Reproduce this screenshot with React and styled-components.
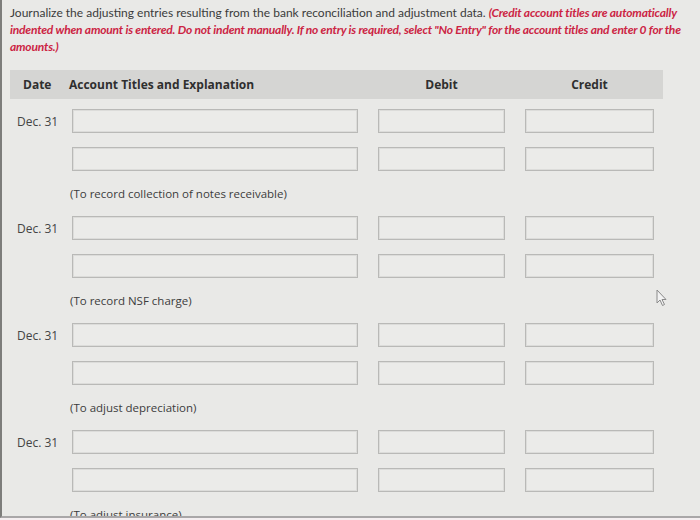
import React from 'react';
import styled, { createGlobalStyle } from 'styled-components';

const GlobalStyle = createGlobalStyle`
  html, body {
    margin: 0;
    padding: 0;
    background: #f4eef0;
  }
`;

const entries = [
  { date: 'Dec. 31', note: '(To record collection of notes receivable)' },
  { date: 'Dec. 31', note: '(To record NSF charge)' },
  { date: 'Dec. 31', note: '(To adjust depreciation)' },
  { date: 'Dec. 31', note: '(To adjust insurance)' },
];

export default function App() {
  return (
    <>
      <GlobalStyle />
      <Page>
        <Instructions>
          Journalize the adjusting entries resulting from the bank reconciliation and adjustment data.{' '}
          <Warning>
            (Credit account titles are automatically indented when amount is entered. Do not indent manually. If no
            entry is required, select "No Entry" for the account titles and enter 0 for the amounts.)
          </Warning>
        </Instructions>

        <Table>
          <HeaderRow>
            <HeadCell>Date</HeadCell>
            <HeadCell $title>Account Titles and Explanation</HeadCell>
            <HeadCell $center>Debit</HeadCell>
            <HeadCell $center>Credit</HeadCell>
          </HeaderRow>

          <Body>
            {entries.map((entry, i) => (
              <Group key={i}>
                <EntryRow>
                  <DateCell>{entry.date}</DateCell>
                  <Field />
                  <Field />
                  <Field />
                </EntryRow>
                <EntryRow>
                  <DateCell />
                  <Field />
                  <Field />
                  <Field />
                </EntryRow>
                <Note>{entry.note}</Note>
              </Group>
            ))}
          </Body>
        </Table>

        <Cursor viewBox="0 0 12 18">
          <path d="M1 1 L1 14 L4 11 L6.5 16.5 L8.5 15.5 L6 10.5 L10 10.5 Z" fill="#f2f2f2" stroke="#8a8a8a" strokeWidth="1" />
        </Cursor>
      </Page>
    </>
  );
}

const Page = styled.div`
  position: relative;
  box-sizing: border-box;
  width: 700px;
  height: 518px;
  padding: 4px 0 0 8px;
  overflow: hidden;
  background: #e9e9e7;
  border-left: 2px solid #7d7d7b;
  border-bottom: 2px solid #a9a7a8;
`;

const Instructions = styled.p`
  margin: 0;
  width: 684px;
  font-family: Lato, 'Open Sans', sans-serif;
  font-size: 12px;
  line-height: 17px;
  color: #3b3b3b;
`;

const Warning = styled.span`
  color: #cc2443;
  font-weight: 700;
  font-style: italic;
  letter-spacing: -0.2px;
`;

const Table = styled.div`
  margin-top: 15px;
  width: 653px;
`;

const columns = `
  display: grid;
  grid-template-columns: 42px 286px 127px 129px;
  column-gap: 20px;
  padding-right: 9px;
`;

const HeaderRow = styled.div`
  ${columns}
  height: 29px;
  align-items: center;
  background: #d5d5d3;
`;

const HeadCell = styled.div`
  font-family: 'Open Sans', sans-serif;
  font-size: 12px;
  font-weight: 700;
  color: #2f2f2f;
  white-space: nowrap;
  padding-left: ${p => (p.$title || p.$center ? '0' : '13px')};
  margin-left: ${p => (p.$title ? '-3px' : '0')};
  text-align: ${p => (p.$center ? 'center' : 'left')};
`;

const Body = styled.div`
  padding-top: 10px;
`;

const Group = styled.div`
  display: flex;
  flex-direction: column;
  row-gap: 14px;
`;

const EntryRow = styled.div`
  ${columns}
  height: 24px;
  align-items: center;
`;

const DateCell = styled.div`
  font-family: 'Open Sans', sans-serif;
  font-size: 12px;
  color: #444;
  padding-left: 7px;
  white-space: nowrap;
`;

const Field = styled.div`
  box-sizing: border-box;
  height: 24px;
  background: #ebebe9;
  border: 1px solid #b9b9b7;
  box-shadow: inset 0 0 0 1px #dcdcda;
`;

const Note = styled.div`
  height: 31px;
  padding-left: 60px;
  font-family: 'Open Sans', sans-serif;
  font-size: 11.5px;
  line-height: 18px;
  color: #3c3c3c;
`;

const Cursor = styled.svg`
  position: absolute;
  left: 654px;
  top: 289px;
  width: 12px;
  height: 18px;
`;
